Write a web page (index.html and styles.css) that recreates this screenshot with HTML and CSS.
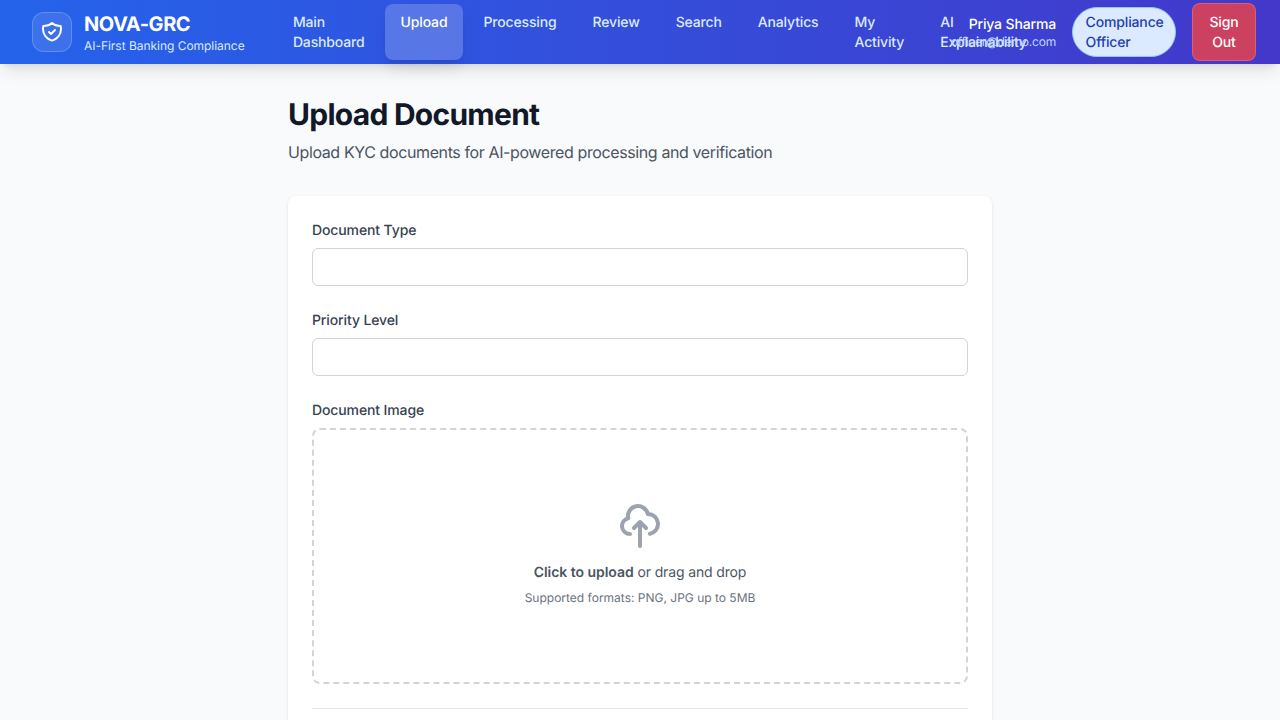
FILE: index.html
```html
<!DOCTYPE html>
<html lang="en">
<head>
<meta charset="utf-8">
<title>NOVA-GRC - Upload Document</title>
<link rel="stylesheet" href="styles.css">
</head>
<body>
<header class="header">
  <div class="brand">
    <div class="brand-mark">
      <svg width="24" height="24" viewBox="0 0 24 24" fill="none" stroke="currentColor" stroke-width="2" stroke-linecap="round" stroke-linejoin="round"><path d="M9 12l2 2 4-4m5.618-4.016A11.955 11.955 0 0112 2.944a11.955 11.955 0 01-8.618 3.04A12.02 12.02 0 003 9c0 5.591 3.824 10.29 9 11.622 5.176-1.332 9-6.03 9-11.622 0-1.042-.133-2.052-.382-3.016z"/></svg>
    </div>
    <div>
      <div class="brand-name">NOVA-GRC</div>
      <div class="brand-tagline">AI-First Banking Compliance</div>
    </div>
  </div>
  <nav class="nav">
    <a class="nav-link">Main<br>Dashboard</a>
    <a class="nav-link active">Upload</a>
    <a class="nav-link">Processing</a>
    <a class="nav-link">Review</a>
    <a class="nav-link">Search</a>
    <a class="nav-link">Analytics</a>
    <a class="nav-link">My<br>Activity</a>
    <a class="nav-link">AI<br>Explainability</a>
  </nav>
  <div class="account">
    <div class="user">
      <div class="user-name">Priya Sharma</div>
      <div class="user-email">officer@demo.com</div>
    </div>
    <span class="role">Compliance<br>Officer</span>
    <button class="sign-out">Sign<br>Out</button>
  </div>
</header>
<main class="page">
  <h1 class="page-title">Upload Document</h1>
  <p class="page-subtitle">Upload KYC documents for AI-powered processing and verification</p>
  <form class="card">
    <div>
      <label class="label" for="type">Document Type</label>
      <input class="input" id="type">
    </div>
    <div>
      <label class="label" for="priority">Priority Level</label>
      <input class="input" id="priority">
    </div>
    <div>
      <div class="label">Document Image</div>
      <div class="dropzone">
        <svg class="drop-icon" width="48" height="48" viewBox="0 0 24 24" fill="none" stroke="currentColor" stroke-width="2" stroke-linecap="round" stroke-linejoin="round"><path d="M7 16a4 4 0 01-.88-7.903A5 5 0 1115.9 6L16 6a5 5 0 011 9.9M15 13l-3-3m0 0l-3 3m3-3v12"/></svg>
        <p class="drop-text"><span class="drop-action">Click to upload</span> or drag and drop</p>
        <p class="drop-hint">Supported formats: PNG, JPG up to 5MB</p>
      </div>
    </div>
    <div class="form-footer"></div>
  </form>
</main>
</body>
</html>
```
FILE: styles.css
```css
* { box-sizing: border-box; margin: 0; }
body {
  height: 100vh;
  overflow: hidden;
  background: #f9fafb;
  color: #111827;
  font: 16px/24px Inter, "Liberation Sans", sans-serif;
  text-rendering: geometricPrecision;
}
svg { display: block; }
.header {
  position: relative;
  display: flex;
  align-items: center;
  height: 64px;
  padding: 0 24px 0 32px;
  background: linear-gradient(to right, #2563eb, #4338ca);
  box-shadow: 0 10px 15px -3px rgba(0,0,0,.1), 0 4px 6px -4px rgba(0,0,0,.1);
}
.brand { display: flex; align-items: center; gap: 12px; flex: 0 0 213px; white-space: nowrap; }
.brand-mark {
  display: flex;
  align-items: center;
  justify-content: center;
  width: 40px;
  height: 40px;
  border: 1px solid rgba(255,255,255,.2);
  border-radius: 12px;
  background: rgba(255,255,255,.1);
  color: #fff;
}
.brand-name { color: #fff; font-size: 20px; line-height: 28px; font-weight: 700; letter-spacing: -.45px; }
.brand-tagline { color: #dbeafe; font-size: 12px; line-height: 16px; letter-spacing: -.03px; }
.nav { display: flex; flex: 1 1 0; min-width: 0; gap: 4px; margin-left: 31.9px; }
.nav-link {
  flex: none;
  padding: 9px 16px 7px;
  border-radius: 8px;
  color: #dbeafe;
  font-size: 14px;
  line-height: 20px;
  font-weight: 500;
  letter-spacing: -.15px;
}
.nav-link.active {
  background: rgba(255,255,255,.2);
  color: #fff;
  box-shadow: 0 10px 15px -3px rgba(0,0,0,.1), 0 4px 6px -4px rgba(0,0,0,.1);
}
.account { position: relative; display: flex; flex: none; align-items: center; gap: 16px; }
.user { text-align: right; }
.user-name { padding-top: 1px; color: #fff; font-size: 14px; line-height: 19px; font-weight: 500; letter-spacing: -.15px; }
.user-email { color: #bfdbfe; font-size: 12px; line-height: 16px; letter-spacing: -.2px; }
.role {
  width: 104px;
  padding: 5px 12px 3px 12.6px;
  border: 1px solid #93c5fd;
  border-radius: 999px;
  background: #dbeafe;
  color: #1e40af;
  font-size: 14px;
  line-height: 20px;
  font-weight: 500;
  letter-spacing: -.15px;
}
.sign-out {
  width: 64px;
  padding: 9px 16px 7px;
  border: 1px solid rgba(252,165,165,.3);
  border-radius: 8px;
  background: rgba(239,68,68,.8);
  color: #fff;
  font: 500 14px/20px Inter, sans-serif;
  letter-spacing: -.15px;
  text-rendering: geometricPrecision;
}
.page { width: 704px; margin: 0 auto; padding-top: 32px; }
.page-title { font-size: 30px; line-height: 38px; font-weight: 700; letter-spacing: -.74px; }
.page-subtitle { margin-top: 6px; color: #4b5563; letter-spacing: -.39px; }
.card {
  display: flex;
  flex-direction: column;
  gap: 24px;
  margin-top: 32px;
  padding: 24px 24px 0;
  border-radius: 8px 8px 0 0;
  background: #fff;
  box-shadow: 0 1px 3px rgba(0,0,0,.1), 0 1px 2px -1px rgba(0,0,0,.1);
}
.label { display: block; margin-bottom: 6px; color: #374151; font-size: 14px; line-height: 22px; font-weight: 500; letter-spacing: -.12px; }
.input { display: block; width: 100%; height: 38px; border: 1px solid #d1d5db; border-radius: 6px; background: #fff; }
.dropzone {
  display: flex;
  flex-direction: column;
  align-items: center;
  justify-content: center;
  height: 256px;
  padding: 20px 0 24px;
  border: 2px dashed #d1d5db;
  border-radius: 8px;
}
.drop-icon { color: #9ca3af; }
.drop-text { margin: 12px 0 6px; color: #4b5563; font-size: 14px; line-height: 22px; letter-spacing: -.14px; }
.drop-action { font-weight: 600; letter-spacing: -.04px; }
.drop-hint { color: #6b7280; font-size: 12px; line-height: 16px; }
.form-footer { height: 12px; border-top: 1px solid #e5e7eb; }
```
